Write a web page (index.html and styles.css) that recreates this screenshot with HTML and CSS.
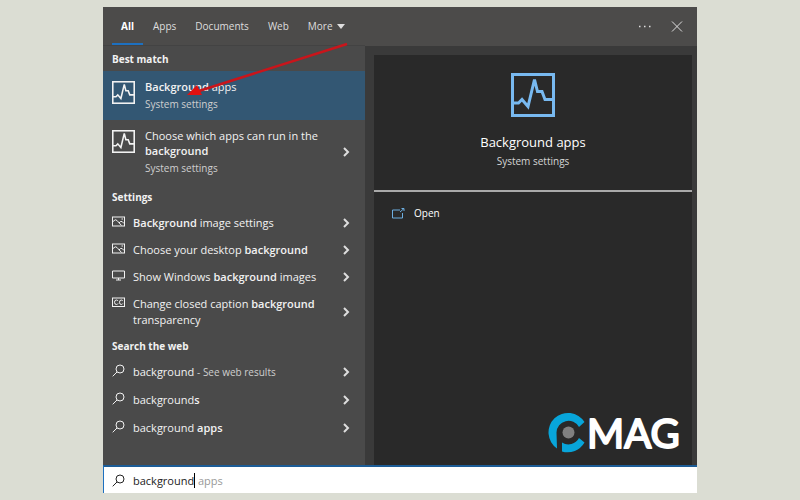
FILE: index.html
```html
<!DOCTYPE html>
<html lang="en">
<head>
    <meta charset="UTF-8">
    <meta name="viewport" content="width=device-width, initial-scale=1.0">
    <title>Search - background apps</title>
    <link rel="stylesheet" href="styles.css">
</head>
<body>

    <!-- Shared icons -->
    <svg class="sprite" aria-hidden="true">
        <symbol id="pulse" viewBox="0 0 44 44">
            <rect x="1.5" y="1.5" width="41" height="41"/>
            <path d="M2 30h5.500l3.500-3.500 6 7 6.500-27 3 12h4.500l3 8H42"/>
        </symbol>
        <symbol id="picture" viewBox="0 0 13 11">
            <rect x="0.5" y="1" width="12" height="9"/>
            <path d="M1 5.500Q3.500 2.500 5 4.500L9.500 9.500M7 7l1.500-1.500Q10 4.500 12 7.500M9.500 3h1.500"/>
        </symbol>
        <symbol id="monitor" viewBox="0 0 13 11">
            <path d="M0.500 1h12v7H0.500zM6.500 8v2M4 10h5"/>
        </symbol>
        <symbol id="caption" viewBox="0 0 13 11">
            <rect x="0.5" y="1" width="12" height="8.500"/>
            <path d="M6 4Q5.500 3 4.500 3 2.500 3 2.500 5.250T4.500 7.500Q5.500 7.500 6 6.500M10.800 4Q10.300 3 9.300 3 7.500 3 7.500 5.250T9.300 7.500Q10.300 7.500 10.800 6.500"/>
        </symbol>
        <symbol id="search" viewBox="0 0 13 13">
            <circle cx="8" cy="5" r="4"/>
            <path d="M5 8L0.700 12.300"/>
        </symbol>
        <symbol id="chevron" viewBox="0 0 8 10">
            <path d="M2 1l4 4-4 4"/>
        </symbol>
    </svg>

    <main class="window">
        <header class="topbar">
            <nav class="tabs">
                <button class="tab active">All</button>
                <button class="tab">Apps</button>
                <button class="tab">Documents</button>
                <button class="tab">Web</button>
                <button class="tab">More <svg class="caret" viewBox="0 0 8 5"><path d="M0 0h8L4 5z"/></svg></button>
            </nav>
            <button class="tool" aria-label="Options">
                <svg width="12" height="12" viewBox="0 0 12 12"><path class="dots" d="M0 5.500h1.500M5 5.500h1.500M10 5.500h1.500"/></svg>
            </button>
            <button class="tool" aria-label="Close">
                <svg width="12" height="12" viewBox="0 0 12 12"><path d="M1 0.500l10 10M11 0.500L1 10.500"/></svg>
            </button>
        </header>

        <div class="content">
            <section class="results">
                <h2>Best match</h2>
                <button class="best selected">
                    <svg class="icon-app"><use href="#pulse"/></svg>
                    <span class="label"><b>Background</b> apps<small>System settings</small></span>
                </button>
                <button class="best">
                    <svg class="icon-app"><use href="#pulse"/></svg>
                    <span class="label">Choose which apps can run in the <b>background</b><small>System settings</small></span>
                    <svg class="chevron"><use href="#chevron"/></svg>
                </button>

                <h2>Settings</h2>
                <button class="row">
                    <svg class="icon"><use href="#picture"/></svg>
                    <span class="label"><b>Background</b> image settings</span>
                    <svg class="chevron"><use href="#chevron"/></svg>
                </button>
                <button class="row">
                    <svg class="icon"><use href="#picture"/></svg>
                    <span class="label">Choose your desktop <b>background</b></span>
                    <svg class="chevron"><use href="#chevron"/></svg>
                </button>
                <button class="row">
                    <svg class="icon"><use href="#monitor"/></svg>
                    <span class="label">Show Windows <b>background</b> images</span>
                    <svg class="chevron"><use href="#chevron"/></svg>
                </button>
                <button class="row">
                    <svg class="icon"><use href="#caption"/></svg>
                    <span class="label">Change closed caption <b>background</b> transparency</span>
                    <svg class="chevron"><use href="#chevron"/></svg>
                </button>

                <h2>Search the web</h2>
                <button class="row web">
                    <svg class="icon"><use href="#search"/></svg>
                    <span class="label">background <span class="hint">- See web results</span></span>
                    <svg class="chevron"><use href="#chevron"/></svg>
                </button>
                <button class="row web">
                    <svg class="icon"><use href="#search"/></svg>
                    <span class="label">background<b>s</b></span>
                    <svg class="chevron"><use href="#chevron"/></svg>
                </button>
                <button class="row web">
                    <svg class="icon"><use href="#search"/></svg>
                    <span class="label">background <b>apps</b></span>
                    <svg class="chevron"><use href="#chevron"/></svg>
                </button>
            </section>

            <section class="preview">
                <div class="card">
                    <div class="summary">
                        <svg class="icon-large"><use href="#pulse"/></svg>
                        <h1>Background apps</h1>
                        <p>System settings</p>
                    </div>
                    <button class="open">
                        <svg width="13" height="11" viewBox="0 0 13 11"><path d="M8 2H0.500v8h10V5M8 4l4-3.500M9.500 0.500H12V3"/></svg>
                        Open
                    </button>
                </div>
            </section>
        </div>

        <form class="searchbar">
            <label for="query" aria-label="Search"><svg class="icon"><use href="#search"/></svg></label>
            <input id="query" type="text" value="background" autocomplete="off">
            <span class="ghost">apps</span>
        </form>

        <!-- Pointer to the first result -->
        <svg class="arrow" viewBox="0 0 162 54">
            <path class="shaft" d="M160 2L12 49"/>
            <path class="head" d="M0 53L10 43L15 53z"/>
        </svg>

        <svg class="logo" viewBox="0 -8 138 58" role="img" aria-label="PC MAG">
            <path class="ring" d="M9 35.500A19.500 19.500 0 1 1 36.500 9L31 14A12 12 0 0 0 8.500 19.500z"/>
            <path class="ring" d="M14 29.500A12 12 0 0 0 31 25L36.500 29.500A19.500 19.500 0 0 1 14 38.500z"/>
            <circle class="hub" cx="20.5" cy="19.5" r="6"/>
            <text x="39" y="35">MAG</text>
        </svg>
    </main>

</body>
</html>
```

FILE: styles.css
```css
* {
    margin: 0;
    padding: 0;
    box-sizing: border-box;
}

body {
    min-height: 100vh;
    display: flex;
    padding: 7px 103px;
    background: #dbddd3;
    font-family: "Open Sans", "Noto Sans", sans-serif;
    font-size: 11px;
    line-height: 15px;
    color: #f2f2f2;
}

button, input {
    font: inherit;
    color: inherit;
    border: none;
    background: none;
    text-align: left;
}

button {
    cursor: pointer;
}

b {
    font-weight: 600;
}

svg {
    fill: none;
    stroke: currentColor;
    flex-shrink: 0;
}

.sprite {
    position: absolute;
    width: 0;
    height: 0;
}

.window {
    position: relative;
    flex: 1;
    display: flex;
    flex-direction: column;
    background: #4a4a4a;
}

/* Top bar */
.topbar {
    display: flex;
    height: 39px;
    padding: 0 14px 0 9px;
    background: #4c4b4a;
}

.tabs {
    display: flex;
    flex: 1;
    gap: 1px;
}

.tab {
    padding: 2px 9px 0;
    border-bottom: 3px solid transparent;
    font-size: 10px;
    color: #dedede;
}

.tab.active {
    border-color: #1d70c0;
    font-weight: bold;
    color: #fff;
}

.caret {
    width: 8px;
    height: 5px;
    margin-left: 2px;
    fill: currentColor;
    stroke: none;
    vertical-align: middle;
}

.tool {
    display: flex;
    align-items: center;
    margin-left: 20px;
    color: #dedede;
}

.dots {
    stroke-width: 1.5;
}

.content {
    flex: 1;
    display: flex;
}

/* Results */
.results {
    width: 262px;
    border-top: 1px solid #434343;
    margin-top: -1px;
}

h2 {
    padding: 6px 9px 4px;
    font-size: 10px;
    font-weight: bold;
    line-height: 15px;
}

.best, .row {
    display: flex;
    width: 100%;
    align-items: flex-start;
    padding: 8px 15px 8px 9px;
}

.best {
    gap: 10px;
}

.row {
    gap: 8px;
    padding: 6px 15px 5px 9px;
    line-height: 16px;
}

.selected {
    background: #335773;
}

.label {
    flex: 1;
}

.label small {
    display: block;
    margin-top: 3px;
    font-size: 10px;
    color: #cfcfcf;
}

.hint {
    font-size: 10px;
    color: #cfcfcf;
}

.icon-app {
    width: 23px;
    height: 23px;
    margin-top: 2px;
    stroke-width: 3;
}

.icon {
    width: 13px;
    height: 13px;
}

.chevron {
    width: 8px;
    height: 10px;
    align-self: center;
    stroke-width: 2;
    color: #dedede;
}

.web {
    padding-bottom: 6px;
}

/* Preview */
.preview {
    flex: 1;
    display: flex;
    padding: 9px 5px 0 9px;
    background: #3a3a3a;
}

.card {
    flex: 1;
    background: #292929;
}

.summary {
    display: flex;
    flex-direction: column;
    align-items: center;
    padding: 18px 0 21px;
    border-bottom: 2px solid #a9a9a9;
}

.icon-large {
    width: 44px;
    height: 44px;
    color: #78b9f0;
    stroke-width: 3;
}

h1 {
    margin-top: 15px;
    font-size: 13px;
    font-weight: normal;
    line-height: 20px;
    color: #fff;
}

.summary p {
    margin-top: 2px;
    font-size: 10px;
    color: #d5d5d5;
}

.open {
    display: flex;
    align-items: center;
    gap: 9px;
    padding: 14px 18px;
    font-size: 10px;
    color: #fff;
}

.open svg {
    color: #6daee0;
}

/* Search bar */
.searchbar {
    display: flex;
    align-items: center;
    gap: 3px;
    height: 28px;
    padding-left: 8px;
    border-top: 2px solid #1c5c96;
    border-left: 1px solid #1d70c0;
    background: #fff;
    color: #222;
}

.searchbar label {
    display: flex;
    margin-right: 5px;
}

.searchbar input {
    width: 62px;
    border-right: 1px solid #000;
    outline: none;
}

.ghost {
    color: #999;
}

/* Overlays */
.arrow {
    position: absolute;
    top: 35px;
    left: 84px;
    width: 162px;
    height: 54px;
    pointer-events: none;
}

.shaft {
    stroke: #c9151b;
    stroke-width: 2.5;
}

.head {
    fill: #e01010;
    stroke: none;
}

.logo {
    position: absolute;
    right: 11px;
    bottom: 30px;
    width: 138px;
    height: 58px;
}

.logo text {
    font-family: Lato, sans-serif;
    font-size: 40px;
    font-weight: normal;
    fill: #fff;
    stroke: #fff;
    stroke-width: 2px;
    stroke-linejoin: round;
}

.ring {
    fill: #08a5da;
    stroke: none;
}

.hub {
    fill: #808080;
    stroke: none;
}
```
